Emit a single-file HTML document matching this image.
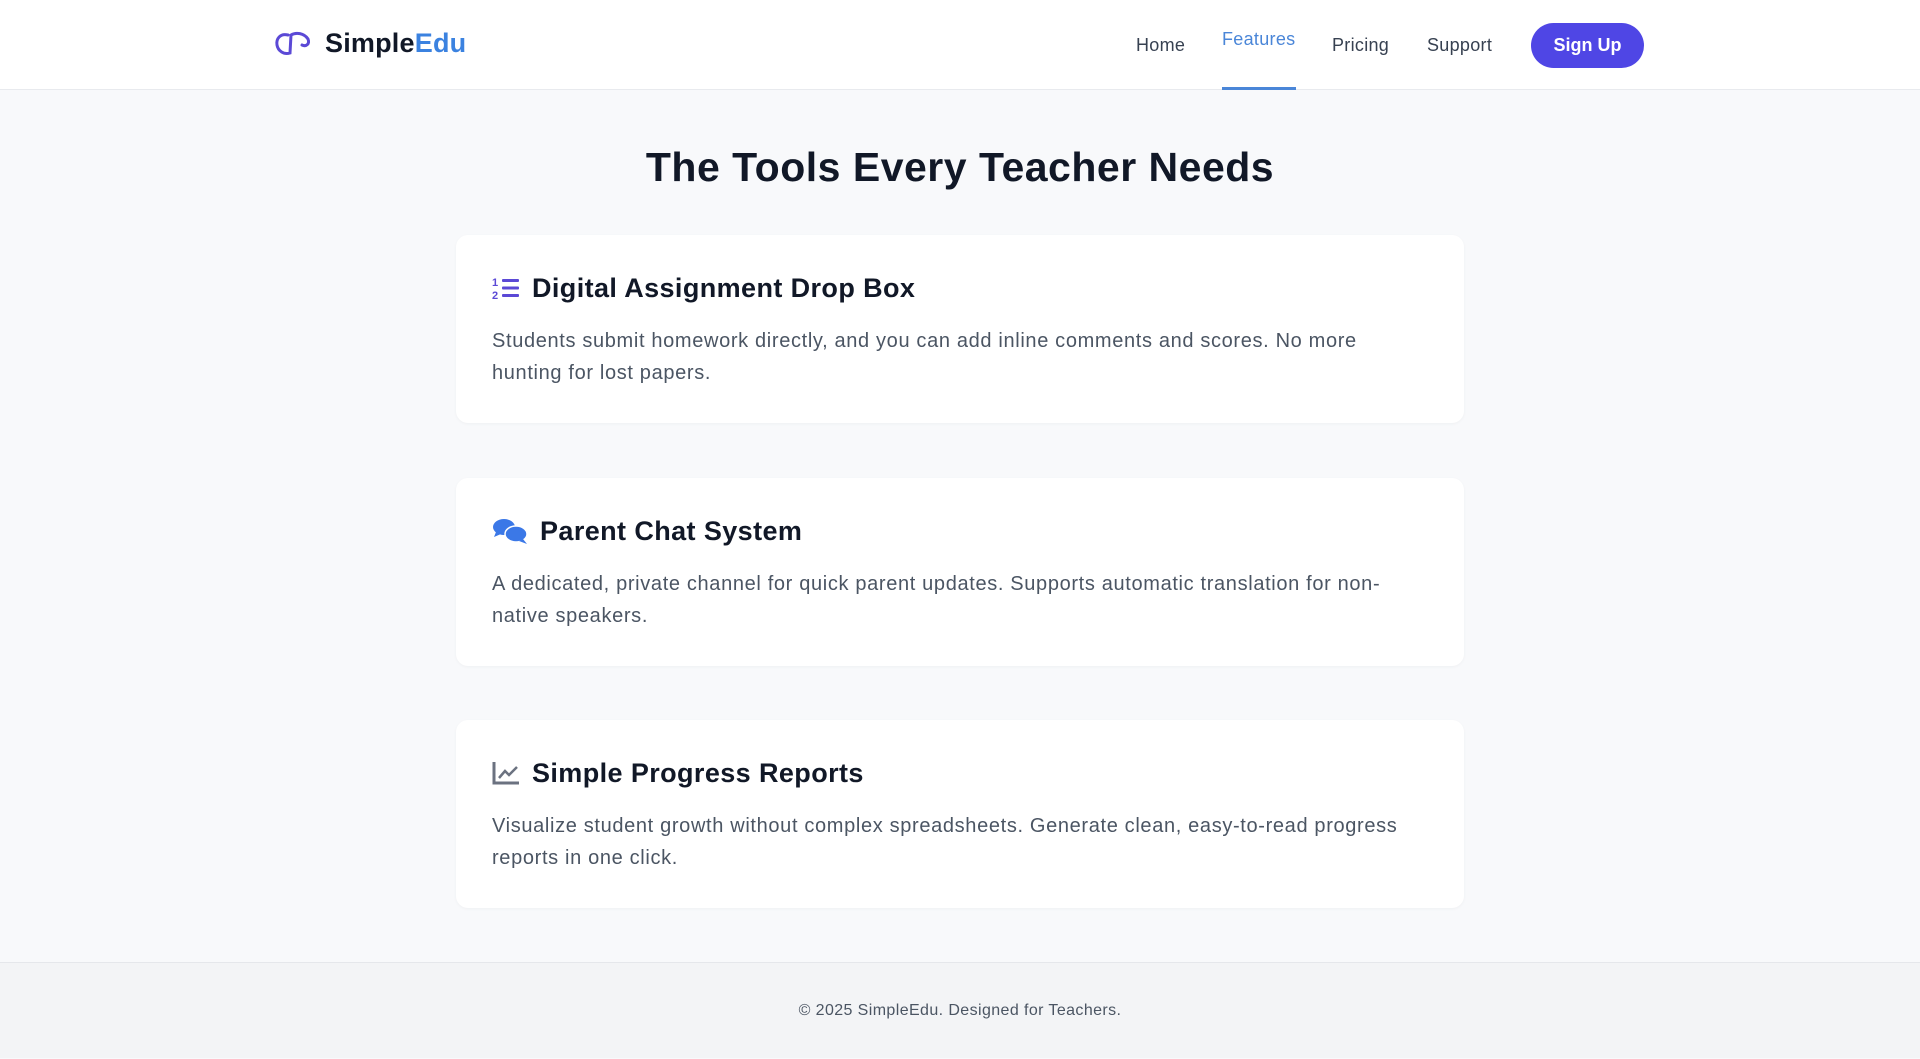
<!DOCTYPE html>
<html><head><meta charset="utf-8"><style>
*{box-sizing:border-box;margin:0;padding:0}
body{width:1920px;height:1058px;font-family:"Liberation Sans",Arial,sans-serif;background:#f8f9fb;color:#111827;overflow:hidden;position:relative}
header{height:90px;background:#fff;border-bottom:1px solid #e8eaee;position:relative}
.logo{position:absolute;left:274px;top:28px;display:flex;align-items:center}
.logo span{font-size:27px;font-weight:700;margin-left:13px;letter-spacing:0.2px}
.logo b{color:#3b82e0}
nav a{position:absolute;font-size:18px;color:#374151;text-decoration:none;top:35px;letter-spacing:0.3px}
nav a.act{color:#4a86d8;top:29px}
.ul{position:absolute;left:1222px;top:87px;width:74px;height:3px;background:#4a86d8}
.btn{position:absolute;left:1531px;top:23px;width:113px;height:45px;border-radius:23px;background:#4f46e5;color:#fff;font-weight:700;font-size:18px;text-align:center;line-height:45px}
h1{position:absolute;top:144px;left:0;width:1920px;text-align:center;font-size:41px;font-weight:700;letter-spacing:0.5px}
.card{position:absolute;left:456px;width:1008px;height:188px;background:#fff;border-radius:12px;box-shadow:0 1px 3px rgba(0,0,0,.04);padding:36px}
.card h2{display:flex;align-items:center;font-size:27px;font-weight:700;height:34px;letter-spacing:0.4px}
.card h2 svg{margin-right:12px}
.card p{margin-top:20px;font-size:20px;line-height:32px;color:#4b5563;letter-spacing:0.65px}
footer{position:absolute;top:962px;left:0;width:1920px;height:96px;background:#f3f4f6;border-top:1px solid #e5e7eb;text-align:center;font-size:16px;color:#4b5563;line-height:96px;letter-spacing:0.4px}
</style></head><body>
<header>
<div class="logo"><svg width="38" height="26" viewBox="0 0 38 26"><path d="M14 4 C6 2 2 8 3 14 C4 20 10 24 16 22 L17 4 C22 1 30 2 34 8 C36 13 32 16 28 14" fill="none" stroke="#5b49d6" stroke-width="3" stroke-linecap="round"/></svg><span>Simple<b>Edu</b></span></div>
<nav><a style="left:1136px">Home</a><a class="act" style="left:1222px">Features</a><a style="left:1332px">Pricing</a><a style="left:1427px">Support</a></nav>
<div class="ul"></div>
<div class="btn">Sign Up</div>
</header>
<h1>The Tools Every Teacher Needs</h1>
<div class="card" style="top:235px"><h2><svg width="28" height="26" viewBox="0 0 28 26"><text x="0" y="11" font-size="11" font-weight="700" fill="#5b49d6" font-family="Liberation Sans">1</text><text x="0" y="24" font-size="11" font-weight="700" fill="#5b49d6" font-family="Liberation Sans">2</text><rect x="10" y="4" width="17" height="3" rx="1" fill="#5b49d6"/><rect x="10" y="11.5" width="17" height="3" rx="1" fill="#5b49d6"/><rect x="10" y="19" width="17" height="3" rx="1" fill="#5b49d6"/></svg>Digital Assignment Drop Box</h2><p>Students submit homework directly, and you can add inline comments and scores. No more<br>hunting for lost papers.</p></div>
<div class="card" style="top:478px"><h2><svg width="36" height="28" viewBox="0 0 36 28"><ellipse cx="12" cy="10" rx="11" ry="8" fill="#3b78e7"/><path d="M4 15 L2 20 L9 17Z" fill="#3b78e7"/><ellipse cx="24" cy="17" rx="11" ry="8" fill="#3b78e7" stroke="#fff" stroke-width="1.5"/><path d="M31 22 L35 27 L27 24Z" fill="#3b78e7"/></svg>Parent Chat System</h2><p>A dedicated, private channel for quick parent updates. Supports automatic translation for non-<br>native speakers.</p></div>
<div class="card" style="top:720px"><h2><svg width="28" height="26" viewBox="0 0 28 26"><path d="M2 2 V23 H27" fill="none" stroke="#6b7280" stroke-width="3"/><path d="M7 18 L13 11 L17 15 L25 7" fill="none" stroke="#6b7280" stroke-width="2.5"/></svg>Simple Progress Reports</h2><p>Visualize student growth without complex spreadsheets. Generate clean, easy-to-read progress<br>reports in one click.</p></div>
<footer>© 2025 SimpleEdu. Designed for Teachers.</footer>
</body></html>
